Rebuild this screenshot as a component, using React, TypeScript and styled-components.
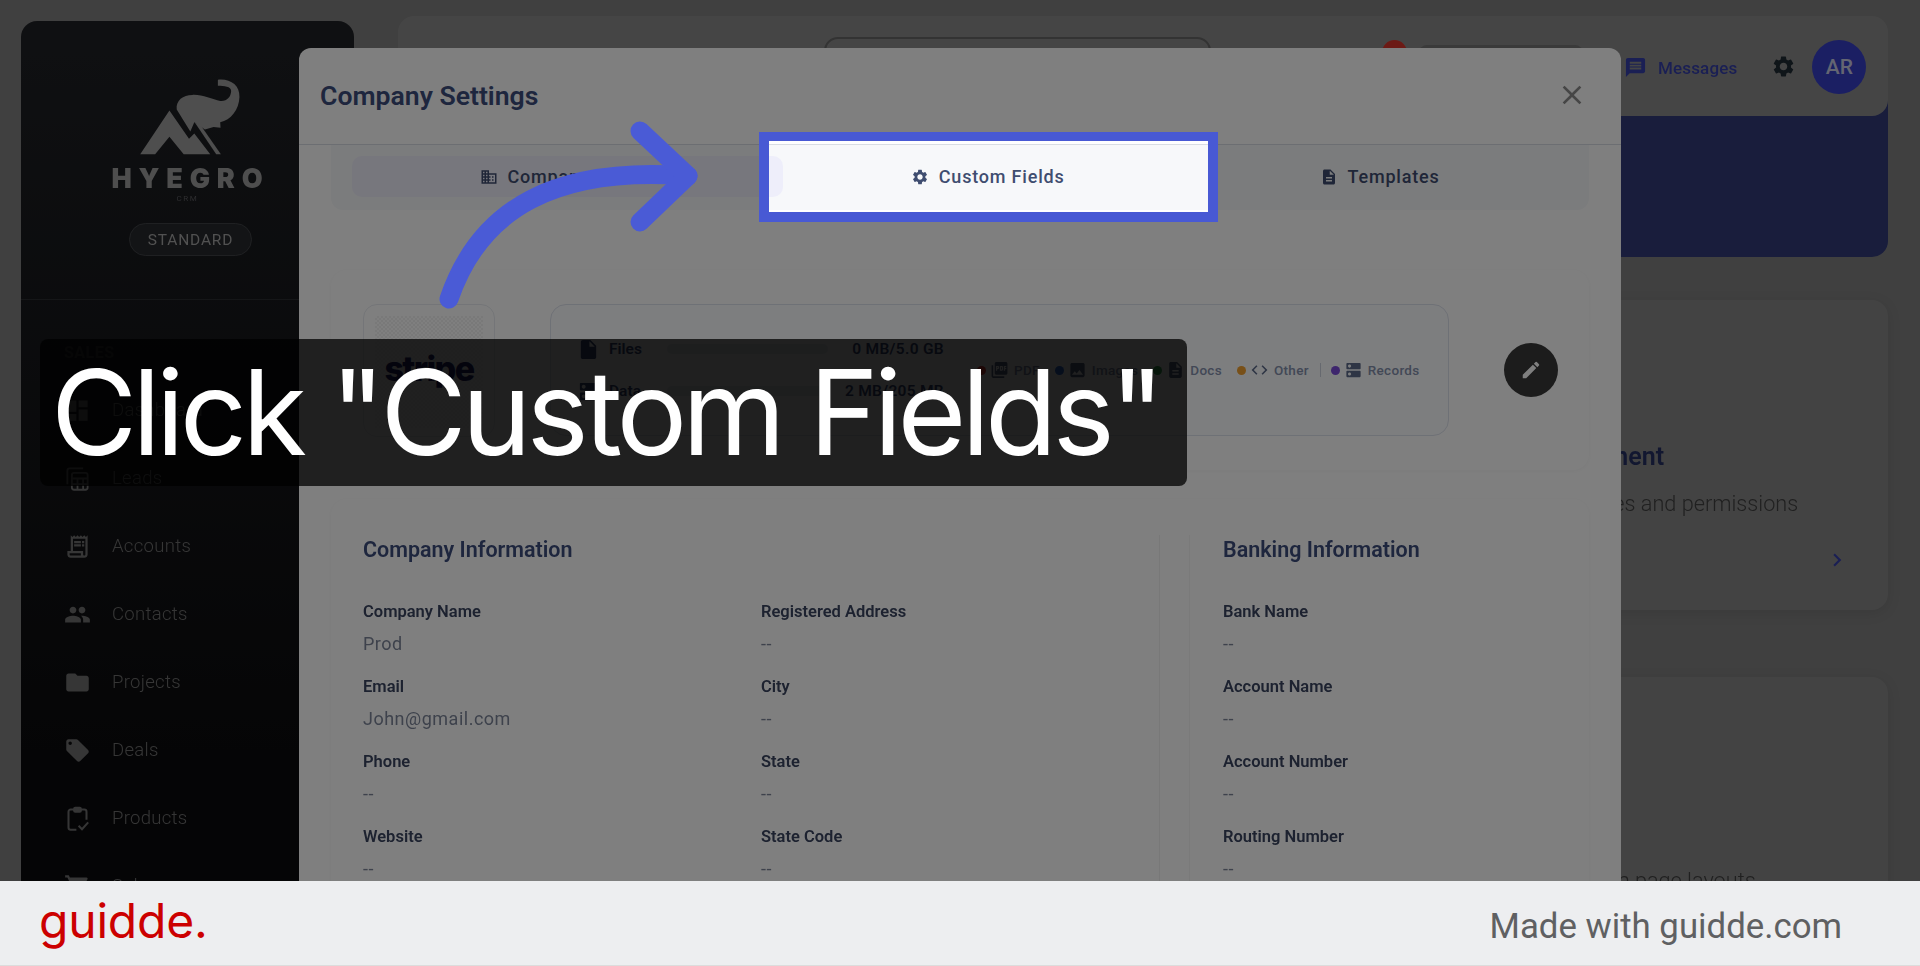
import React, { FC } from "react";
import styled, { createGlobalStyle } from "styled-components";
import { IconType } from "react-icons";
import {
  MdBusiness,
  MdChevronRight,
  MdClose,
  MdCode,
  MdDashboard,
  MdDescription,
  MdDns,
  MdEdit,
  MdFolder,
  MdImage,
  MdInsertDriveFile,
  MdLocalOffer,
  MdMessage,
  MdOutlineReceiptLong,
  MdPeople,
  MdPictureAsPdf,
  MdSettings,
  MdShoppingCart,
} from "react-icons/md";

const GlobalStyle = createGlobalStyle`
  html, body {
    margin: 0;
    padding: 0;
    height: 966px;
    overflow: hidden;
    font-family: Roboto, "Liberation Sans", sans-serif;
  }
  * { box-sizing: border-box; }
`;

const Screen = styled.div`
  position: relative;
  height: 881px;
  overflow: hidden;
`;

const Scene = styled.div`
  position: relative;
  height: 881px;
  background: #808080;
  filter: blur(0.6px);
`;

const Page = styled.div`
  display: flex;
  height: 100%;
  padding: 0 32px 0 21px;
`;

/* sidebar */
const Sidebar = styled.aside`
  flex: 0 0 333px;
  margin: 21px 44px 0 0;
  padding-top: 57px;
  border-radius: 16px 16px 0 0;
  background: linear-gradient(#1f2125, #0b0b0d 85%);
  display: flex;
  flex-direction: column;
`;

const Brand = styled.div`
  display: flex;
  flex-direction: column;
  align-items: center;
  padding-bottom: 43px;
  border-bottom: 1px solid #2a2c30;
  svg {
    margin-left: 4px;
  }
`;

const BrandName = styled.div`
  margin: 10px 0 0 6px;
  font-family: Inter, sans-serif;
  font-weight: 900;
  font-size: 27px;
  line-height: 26px;
  letter-spacing: 6.8px;
  color: #9c9c9c;
`;

const BrandSub = styled.div`
  margin-top: 1px;
  font-size: 8px;
  line-height: 12px;
  letter-spacing: 1.6px;
  color: #5a5a5e;
`;

const PlanPill = styled.div`
  margin: 18px 0 0 6px;
  width: 123px;
  height: 33px;
  display: flex;
  align-items: center;
  justify-content: center;
  border: 1px solid #3f4145;
  border-radius: 17px;
  background: #26282c;
  font-size: 15.5px;
  letter-spacing: 0.8px;
  color: #a2a2a2;
`;

const SectionLabel = styled.div`
  margin: 43px 0 0 43px;
  font-size: 16px;
  font-weight: 700;
  line-height: 20px;
  letter-spacing: 0.5px;
  color: #303236;
`;

const NavList = styled.nav`
  margin-top: 13px;
  display: flex;
  flex-direction: column;
`;

const NavItem = styled.div`
  height: 68px;
  display: flex;
  align-items: center;
  gap: 21px;
  padding-left: 43px;
  font-size: 18.5px;
  font-weight: 300;
  letter-spacing: 0.3px;
  color: #6c6c6c;
`;

const NavIcon = styled.span`
  width: 27px;
  display: flex;
  justify-content: center;
  font-size: 27px;
  color: #6c6c6c;
`;

/* main page behind the modal */
const Main = styled.main`
  flex: 1;
  min-width: 0;
  padding-top: 16px;
`;

const TopBar = styled.header`
  position: relative;
  height: 100px;
  display: flex;
  align-items: flex-start;
  padding: 21px 21px 0 426px;
  border-radius: 16px;
  background: #8b8b8b;
`;

const SearchBox = styled.div`
  width: 387px;
  height: 58px;
  border: 2px solid #666;
  border-radius: 14px;
`;

const Badge = styled.span`
  width: 25px;
  height: 25px;
  margin: 3px 0 0 171px;
  border-radius: 50%;
  background: #d9352a;
`;

const NotifyButton = styled.div`
  width: 164px;
  height: 40px;
  margin: 8px 0 0 12px;
  border-radius: 8px;
  background: #747474;
`;

const MessagesLink = styled.div`
  margin: 19px 0 0 41px;
  display: flex;
  align-items: center;
  gap: 11px;
  font-size: 17px;
  font-weight: 500;
  letter-spacing: 0.15px;
  color: #353fa8;
  svg {
    font-size: 23px;
  }
`;

const GearButton = styled.div`
  margin: 17px 0 0 34px;
  font-size: 25px;
  line-height: 0;
  color: #1f2a33;
`;

const Avatar = styled.div`
  width: 54px;
  height: 54px;
  margin: 3px 0 0 16px;
  display: flex;
  align-items: center;
  justify-content: center;
  border-radius: 50%;
  background: #363ec6;
  font-size: 21px;
  font-weight: 500;
  color: #c8cae4;
`;

const Banner = styled.div`
  height: 161px;
  margin-top: -20px;
  border-radius: 0 0 16px 16px;
  background: #323a78;
`;

const CardGrid = styled.div<{ $top: number }>`
  display: grid;
  grid-template-columns: repeat(3, 1fr);
  gap: 43px;
  margin-top: ${(p) => p.$top}px;
`;

const Card = styled.section`
  height: 310px;
  padding: 136px 38px 0 40px;
  border-radius: 16px;
  background: #878787;
  box-shadow: 0 3px 14px rgba(0, 0, 0, 0.1);
`;

const CardTitle = styled.h3`
  margin: 0;
  font-size: 25px;
  font-weight: 600;
  line-height: 42px;
  white-space: nowrap;
  color: #242f60;
`;

const CardText = styled.p`
  margin: 11px 0 0;
  font-size: 21.7px;
  font-weight: 300;
  line-height: 30px;
  white-space: nowrap;
  color: #414141;
`;

const CardLink = styled.div`
  margin-top: 28px;
  display: flex;
  justify-content: flex-end;
  font-size: 26px;
  color: #353fa8;
`;

/* modal */
const Modal = styled.div`
  position: absolute;
  z-index: 2;
  left: 299px;
  top: 48px;
  width: 1322px;
  height: 900px;
  border-radius: 12px 12px 0 0;
  background: #fff;
`;

const ModalHeader = styled.div`
  height: 97px;
  display: flex;
  align-items: center;
  justify-content: space-between;
  padding: 0 33px 2px 21px;
  border-bottom: 1px solid #d9dde4;
`;

const ModalTitle = styled.h2`
  margin: 0;
  font-size: 26.6px;
  font-weight: 600;
  color: #3c4d7c;
`;

const CloseButton = styled.div`
  font-size: 32px;
  line-height: 0;
  color: #8c8c8c;
`;

const ModalBody = styled.div`
  padding: 0 32px;
`;

const TabList = styled.div`
  height: 65px;
  display: flex;
  padding: 11px 22px 13px 21px;
  border-radius: 0 0 12px 12px;
  background: #f7f8fa;
`;

const Tab = styled.div<{ $active?: boolean }>`
  flex: 1 1 auto;
  display: flex;
  align-items: center;
  justify-content: center;
  gap: 10px;
  border-radius: 10px;
  background: ${(p) => (p.$active ? "#eeeefa" : "transparent")};
  font-size: 18px;
  font-weight: 500;
  letter-spacing: 0.8px;
  color: #3f4d70;
  svg {
    font-size: 18px;
  }
`;

const Panel = styled.section<{ $top: number }>`
  margin-top: ${(p) => p.$top}px;
  border-radius: 16px;
  background: #fff;
  box-shadow: 0 1px 5px rgba(30, 40, 60, 0.04);
`;

const ProfileRow = styled(Panel)`
  height: 200px;
  display: flex;
  align-items: center;
  gap: 55px;
  padding: 0 31px 0 32px;
`;

const LogoBox = styled.div`
  position: relative;
  flex: 0 0 132px;
  height: 133px;
  display: flex;
  align-items: center;
  justify-content: center;
  border: 1px solid #e8ebf0;
  border-radius: 14px;
`;

const Checker = styled.div`
  position: absolute;
  inset: 11px 11px auto;
  height: 112px;
  background: repeating-conic-gradient(#f3f3f3 0 25%, #fff 0 50%) 0 0 / 4px 4px;
`;

const StripeMark = styled.span`
  position: relative;
  margin-top: -3px;
  font-family: Inter, sans-serif;
  font-size: 34px;
  font-weight: 800;
  letter-spacing: -1.6px;
  color: #23256a;
`;

const StorageBox = styled.div`
  flex: 0 0 899px;
  height: 132px;
  display: flex;
  align-items: center;
  padding-left: 26px;
  border: 1px solid #dde2ec;
  border-radius: 16px;
  background: #fbfcff;
`;

const StorageRows = styled.div`
  width: 367px;
  display: flex;
  flex-direction: column;
  gap: 20px;
`;

const StorageRow = styled.div`
  height: 22px;
  display: flex;
  align-items: center;
  font-size: 15.5px;
  font-weight: 600;
  color: #3c4d7c;
  svg {
    flex: none;
    font-size: 23px;
    color: #3c4d7c;
  }
`;

const StorageName = styled.span`
  width: 58px;
  margin-left: 9px;
`;

const StorageBar = styled.div`
  width: 161px;
  height: 10px;
  border-radius: 5px;
  background: #e7eaf0;
`;

const StorageValue = styled.span`
  margin-left: auto;
  letter-spacing: 0.3px;
`;

const Legend = styled.div`
  margin-left: 33px;
  display: flex;
  align-items: center;
  gap: 15px;
`;

const LegendItem = styled.div`
  display: flex;
  align-items: center;
  font-size: 13.5px;
  font-weight: 500;
  letter-spacing: 0.3px;
  color: #8490ac;
`;

const Dot = styled.span<{ $color: string }>`
  width: 9px;
  height: 9px;
  margin-right: 4px;
  border-radius: 50%;
  background: ${(p) => p.$color};
`;

const LegendIcon = styled.span`
  width: 19px;
  margin-right: 5px;
  display: flex;
  justify-content: center;
  font-size: 20px;
  color: #5d6b8a;
`;

const LegendDivider = styled.span`
  width: 1px;
  height: 14px;
  margin: 0 -5px 0 -4px;
  background: #ccd2de;
`;

const EditButton = styled.div`
  flex: 0 0 54px;
  height: 54px;
  display: flex;
  align-items: center;
  justify-content: center;
  border-radius: 50%;
  background: #383838;
  font-size: 22px;
  color: #fff;
`;

const InfoPanel = styled(Panel)`
  height: 520px;
  display: flex;
  padding: 36px 0 0 32px;
`;

const InfoMain = styled.div`
  width: 798px;
  border-right: 1px solid #f0f0f0;
`;

const InfoSide = styled.div`
  margin-left: 29px;
  padding-left: 33px;
  border-left: 1px solid #f4f4f4;
  flex: 1;
`;

const InfoTitle = styled.h3`
  margin: 0 0 37px;
  font-size: 21.5px;
  font-weight: 600;
  line-height: 30px;
  color: #3c4d7c;
`;

const FieldGrid = styled.div<{ $cols: number }>`
  display: grid;
  grid-template-columns: repeat(${(p) => p.$cols}, 398px);
`;

const Field = styled.div`
  height: 75px;
`;

const FieldLabel = styled.div`
  font-size: 16.5px;
  font-weight: 600;
  line-height: 20px;
  color: #3a4560;
`;

const FieldValue = styled.div`
  margin-top: 9px;
  font-size: 18px;
  line-height: 26px;
  letter-spacing: 0.5px;
  color: #7c8599;
`;

/* guide annotations on top of the screenshot */
const Dimmer = styled.div`
  position: absolute;
  inset: 0;
  background: rgba(0, 0, 0, 0.5);
  clip-path: path(evenodd, "M0 0H1920V881H0Z M769 141H1208V212H769Z");
`;

const Spotlight = styled.div`
  position: absolute;
  left: 759px;
  top: 132px;
  width: 459px;
  height: 90px;
  border: solid #4859d4;
  border-width: 9px 10px 10px;
`;

const ArrowLayer = styled.svg`
  position: absolute;
  inset: 0;
  width: 1920px;
  height: 881px;
`;

const Caption = styled.div`
  position: absolute;
  left: 40px;
  top: 339px;
  width: 1147px;
  height: 147px;
  display: flex;
  align-items: center;
  padding-left: 11px;
  border-radius: 8px;
  background: rgba(0, 0, 0, 0.75);
  font-family: Inter, sans-serif;
  font-size: 118px;
  font-weight: 400;
  line-height: 147px;
  letter-spacing: -4.9px;
  white-space: nowrap;
  color: #fff;
`;

const Footer = styled.footer`
  height: 85px;
  display: flex;
  align-items: center;
  justify-content: space-between;
  padding: 0 78px 0 39px;
  border-bottom: 1px solid #dcdcdc;
  background: #edeef0;
`;

const FooterLogo = styled.div`
  margin-top: -6px;
  font-family: Inter, sans-serif;
  font-size: 48px;
  letter-spacing: -0.2px;
  color: #cc0000;
`;

const FooterNote = styled.div`
  margin-top: 6px;
  font-size: 34.8px;
  color: #5f6062;
`;

const ElephantLogo: FC = () => (
  <svg width="104" height="78" viewBox="150 55 310 235" fill="#9c9c9c">
    <path d="M155 285 L243 153 L302 238 L318 222 L366 285 L286 285 L243 232 L200 285 Z" />
    <path d="M320 190 L336 196 L398 285 L384 285 Z" />
    <path d="M265 150 C262 122 284 106 312 106 C340 104 372 120 396 124 C416 126 428 112 429 94 C429 80 408 78 389 78 L389 60 C426 56 455 76 454 112 C453 150 428 182 396 188 L397 205 L376 203 L350 210 L318 188 L306 216 Z" />
  </svg>
);

const LeadsIcon: IconType = () => (
  <svg width="27" height="27" viewBox="0 0 24 24" fill="none" stroke="currentColor" strokeWidth="1.6">
    <path d="M17 3H5a2 2 0 0 0-2 2v12" />
    <rect x="7" y="7" width="14" height="15" rx="2" />
    <path d="M7 12h14M7 17h14M12 12v10M17 12v10" />
  </svg>
);

const ProductsIcon: IconType = () => (
  <svg width="27" height="27" viewBox="0 0 24 24" fill="none" stroke="currentColor" strokeWidth="1.8">
    <path d="M9 4H6a2 2 0 0 0-2 2v14a2 2 0 0 0 2 2h5" />
    <path d="M15 4h3a2 2 0 0 1 2 2v7" />
    <rect x="9" y="2.5" width="6" height="3.5" rx="1" fill="currentColor" />
    <path d="M13 18.5l3 3 5.5-6" />
  </svg>
);

const navItems: { label: string; icon: IconType }[] = [
  { label: "Dashboard", icon: MdDashboard },
  { label: "Leads", icon: LeadsIcon },
  { label: "Accounts", icon: MdOutlineReceiptLong },
  { label: "Contacts", icon: MdPeople },
  { label: "Projects", icon: MdFolder },
  { label: "Deals", icon: MdLocalOffer },
  { label: "Products", icon: ProductsIcon },
  { label: "Sales", icon: MdShoppingCart },
];

const legend: { label: string; color: string; icon: IconType }[] = [
  { label: "PDF", color: "#e53935", icon: MdPictureAsPdf },
  { label: "Images", color: "#2f6fe0", icon: MdImage },
  { label: "Docs", color: "#2fa84f", icon: MdDescription },
  { label: "Other", color: "#f0a030", icon: MdCode },
];

const companyFields = [
  ["Company Name", "Prod"],
  ["Registered Address", "--"],
  ["Email", "John@gmail.com"],
  ["City", "--"],
  ["Phone", "--"],
  ["State", "--"],
  ["Website", "--"],
  ["State Code", "--"],
];

const bankFields = [
  ["Bank Name", "--"],
  ["Account Name", "--"],
  ["Account Number", "--"],
  ["Routing Number", "--"],
];

const App: FC = () => (
  <>
    <GlobalStyle />
    <Screen>
      <Scene>
        <Page>
          <Sidebar>
            <Brand>
              <ElephantLogo />
              <BrandName>HYEGRO</BrandName>
              <BrandSub>CRM</BrandSub>
              <PlanPill>STANDARD</PlanPill>
            </Brand>
            <SectionLabel>SALES</SectionLabel>
            <NavList>
              {navItems.map(({ label, icon: Icon }) => (
                <NavItem key={label}>
                  <NavIcon>
                    <Icon />
                  </NavIcon>
                  {label}
                </NavItem>
              ))}
            </NavList>
          </Sidebar>
          <Main>
            <TopBar>
              <SearchBox />
              <Badge />
              <NotifyButton />
              <MessagesLink>
                <MdMessage />
                Messages
              </MessagesLink>
              <GearButton>
                <MdSettings />
              </GearButton>
              <Avatar>AR</Avatar>
            </TopBar>
            <Banner />
            <CardGrid $top={43}>
              <Card />
              <Card />
              <Card>
                <CardTitle>Role Management</CardTitle>
                <CardText>Manage user roles and permissions</CardText>
                <CardLink>
                  <MdChevronRight />
                </CardLink>
              </Card>
            </CardGrid>
            <CardGrid $top={67}>
              <Card />
              <Card />
              <Card>
                <CardTitle>Layouts</CardTitle>
                <CardText>Configure custom page layouts</CardText>
              </Card>
            </CardGrid>
          </Main>
        </Page>
        <Modal>
          <ModalHeader>
            <ModalTitle>Company Settings</ModalTitle>
            <CloseButton>
              <MdClose />
            </CloseButton>
          </ModalHeader>
          <ModalBody>
            <TabList>
              <Tab $active>
                <MdBusiness />
                Company Details
              </Tab>
              <Tab>
                <MdSettings />
                Custom Fields
              </Tab>
              <Tab>
                <MdDescription />
                Templates
              </Tab>
            </TabList>
            <ProfileRow $top={60}>
              <LogoBox>
                <Checker />
                <StripeMark>stripe</StripeMark>
              </LogoBox>
              <StorageBox>
                <StorageRows>
                  <StorageRow>
                    <MdInsertDriveFile />
                    <StorageName>Files</StorageName>
                    <StorageBar />
                    <StorageValue>0 MB/5.0 GB</StorageValue>
                  </StorageRow>
                  <StorageRow>
                    <MdDns />
                    <StorageName>Data</StorageName>
                    <StorageBar />
                    <StorageValue>2 MB/205 MB</StorageValue>
                  </StorageRow>
                </StorageRows>
                <Legend>
                  {legend.map(({ label, color, icon: Icon }) => (
                    <LegendItem key={label}>
                      <Dot $color={color} />
                      <LegendIcon>
                        <Icon />
                      </LegendIcon>
                      {label}
                    </LegendItem>
                  ))}
                  <LegendDivider />
                  <LegendItem>
                    <Dot $color="#7c4ddb" />
                    <LegendIcon>
                      <MdDns />
                    </LegendIcon>
                    Records
                  </LegendItem>
                </Legend>
              </StorageBox>
              <EditButton>
                <MdEdit />
              </EditButton>
            </ProfileRow>
            <InfoPanel $top={29}>
              <InfoMain>
                <InfoTitle>Company Information</InfoTitle>
                <FieldGrid $cols={2}>
                  {companyFields.map(([label, value]) => (
                    <Field key={label}>
                      <FieldLabel>{label}</FieldLabel>
                      <FieldValue>{value}</FieldValue>
                    </Field>
                  ))}
                </FieldGrid>
              </InfoMain>
              <InfoSide>
                <InfoTitle>Banking Information</InfoTitle>
                <FieldGrid $cols={1}>
                  {bankFields.map(([label, value]) => (
                    <Field key={label}>
                      <FieldLabel>{label}</FieldLabel>
                      <FieldValue>{value}</FieldValue>
                    </Field>
                  ))}
                </FieldGrid>
              </InfoSide>
            </InfoPanel>
          </ModalBody>
        </Modal>
      </Scene>
      <Dimmer />
      <Spotlight />
      <ArrowLayer viewBox="0 0 1920 881" fill="none" stroke="#4a5bd6" strokeWidth="19" strokeLinecap="round" strokeLinejoin="round">
        <path d="M449 299 C480 208 556 166 688 176" />
        <path d="M640 131 L688 176 L640 222" />
      </ArrowLayer>
      <Caption>Click "Custom Fields"</Caption>
    </Screen>
    <Footer>
      <FooterLogo>guidde.</FooterLogo>
      <FooterNote>Made with guidde.com</FooterNote>
    </Footer>
  </>
);

export default App;
